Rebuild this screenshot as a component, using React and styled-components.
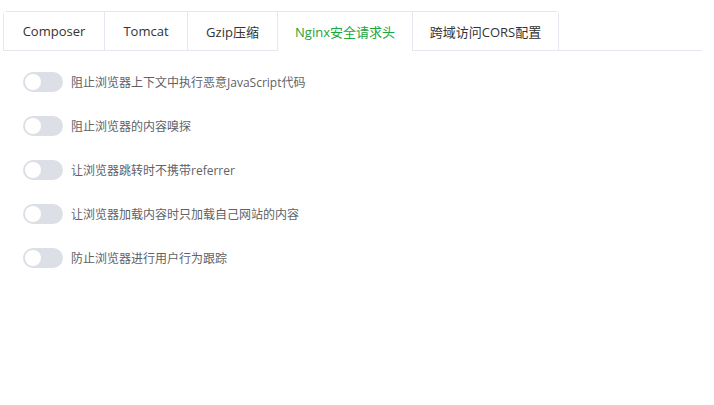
import React, { useState } from 'react'
import styled, { createGlobalStyle } from 'styled-components'

const Global = createGlobalStyle`
  body {
    margin: 0;
    background: #fff;
    font-family: "Open Sans", "Noto Sans CJK SC", sans-serif;
  }
`

const Page = styled.div`
  padding: 11px 12px 0 3px;
`

const TabBar = styled.div`
  display: flex;
  border-bottom: 1px solid #e4e7ed;
  height: 39px;
`

const TabList = styled.div`
  display: flex;
  border: 1px solid #e4e7ed;
  border-bottom: none;
  border-radius: 4px 4px 0 0;
`

const Tab = styled.div`
  box-sizing: border-box;
  width: ${p => p.$w}px;
  display: flex;
  align-items: center;
  justify-content: center;
  font-size: 13px;
  color: ${p => (p.$active ? '#20a53a' : '#333')};
  border-left: ${p => (p.$first ? 'none' : '1px solid #e4e7ed')};
  background: #fff;
  margin-bottom: ${p => (p.$active ? '-1px' : '0')};
  height: ${p => (p.$active ? '39px' : '38px')};
  padding-bottom: ${p => (p.$active ? '1px' : '0')};
  cursor: pointer;
`

const Body = styled.div`
  padding: 9px 20px;
  display: flex;
  flex-direction: column;
`

const Row = styled.label`
  display: flex;
  align-items: center;
  height: 44px;
  gap: 8px;
  font-size: 12px;
  color: #606266;
`

const Switch = styled.span`
  position: relative;
  width: 40px;
  height: 20px;
  border-radius: 10px;
  background: ${p => (p.$on ? '#20a53a' : '#dcdfe6')};
  transition: background 0.2s;
  &::after {
    content: '';
    position: absolute;
    top: 2px;
    left: ${p => (p.$on ? '22px' : '2px')};
    width: 16px;
    height: 16px;
    border-radius: 50%;
    background: #fff;
    transition: left 0.2s;
  }
`

const tabs = [
  ['Composer', 100],
  ['Tomcat', 83],
  ['Gzip压缩', 90],
  ['Nginx安全请求头', 135],
  ['跨域访问CORS配置', 146],
]

const options = [
  '阻止浏览器上下文中执行恶意JavaScript代码',
  '阻止浏览器的内容嗅探',
  '让浏览器跳转时不携带referrer',
  '让浏览器加载内容时只加载自己网站的内容',
  '防止浏览器进行用户行为跟踪',
]

export default function App() {
  const [active, setActive] = useState(3)
  const [on, setOn] = useState(options.map(() => false))

  return (
    <Page>
      <Global />
      <TabBar>
        <TabList>
          {tabs.map(([name, w], i) => (
            <Tab key={name} $w={w} $first={i === 0} $active={i === active} onClick={() => setActive(i)}>
              {name}
            </Tab>
          ))}
        </TabList>
      </TabBar>
      <Body>
        {options.map((text, i) => (
          <Row key={text} onClick={() => setOn(on.map((v, j) => (j === i ? !v : v)))}>
            <Switch $on={on[i]} />
            {text}
          </Row>
        ))}
      </Body>
    </Page>
  )
}
